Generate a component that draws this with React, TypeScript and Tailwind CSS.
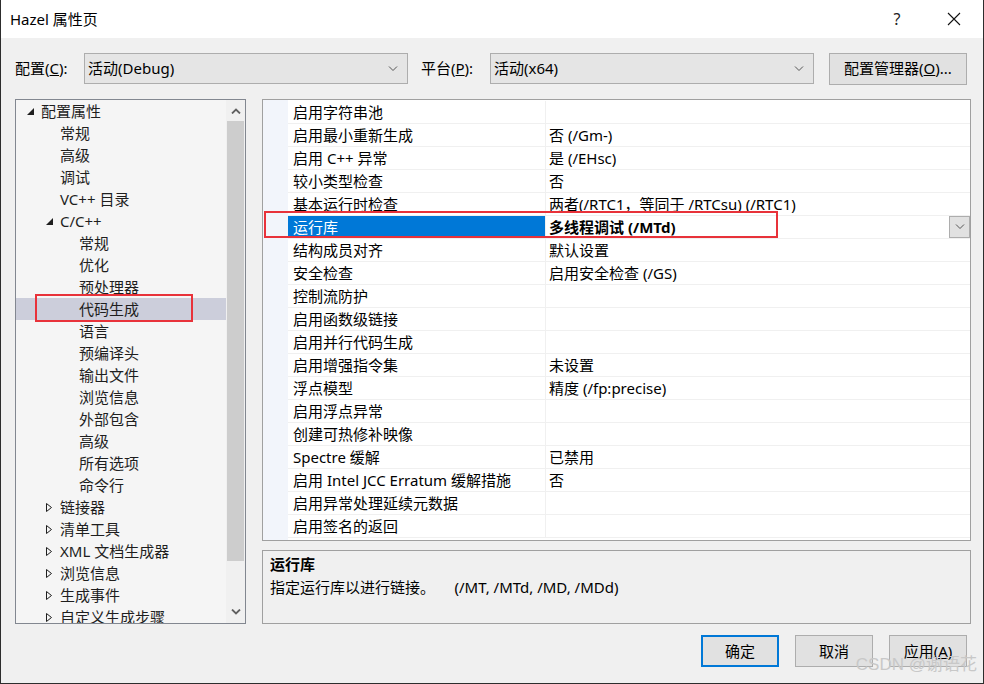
import React from 'react';

const font = "font-['Noto_Sans','Noto_Sans_CJK_SC',sans-serif]";

type TreeItem = { label: string; level: 0 | 1 | 2; arrow?: 'open' | 'closed'; selected?: boolean };

const tree: TreeItem[] = [
  { label: '配置属性', level: 0, arrow: 'open' },
  { label: '常规', level: 1 },
  { label: '高级', level: 1 },
  { label: '调试', level: 1 },
  { label: 'VC++ 目录', level: 1 },
  { label: 'C/C++', level: 1, arrow: 'open' },
  { label: '常规', level: 2 },
  { label: '优化', level: 2 },
  { label: '预处理器', level: 2 },
  { label: '代码生成', level: 2, selected: true },
  { label: '语言', level: 2 },
  { label: '预编译头', level: 2 },
  { label: '输出文件', level: 2 },
  { label: '浏览信息', level: 2 },
  { label: '外部包含', level: 2 },
  { label: '高级', level: 2 },
  { label: '所有选项', level: 2 },
  { label: '命令行', level: 2 },
  { label: '链接器', level: 1, arrow: 'closed' },
  { label: '清单工具', level: 1, arrow: 'closed' },
  { label: 'XML 文档生成器', level: 1, arrow: 'closed' },
  { label: '浏览信息', level: 1, arrow: 'closed' },
  { label: '生成事件', level: 1, arrow: 'closed' },
  { label: '自定义生成步骤', level: 1, arrow: 'closed' },
];

const props: [string, string][] = [
  ['启用字符串池', ''],
  ['启用最小重新生成', '否 (/Gm-)'],
  ['启用 C++ 异常', '是 (/EHsc)'],
  ['较小类型检查', '否'],
  ['基本运行时检查', '两者(/RTC1，等同于 /RTCsu) (/RTC1)'],
  ['运行库', '多线程调试 (/MTd)'],
  ['结构成员对齐', '默认设置'],
  ['安全检查', '启用安全检查 (/GS)'],
  ['控制流防护', ''],
  ['启用函数级链接', ''],
  ['启用并行代码生成', ''],
  ['启用增强指令集', '未设置'],
  ['浮点模型', '精度 (/fp:precise)'],
  ['启用浮点异常', ''],
  ['创建可热修补映像', ''],
  ['Spectre 缓解', '已禁用'],
  ['启用 Intel JCC Erratum 缓解措施', '否'],
  ['启用异常处理延续元数据', ''],
  ['启用签名的返回', ''],
];

function Chevron({ className = '', up = false, thick = false }: { className?: string; up?: boolean; thick?: boolean }) {
  return (
    <svg width="10" height="6" viewBox="0 0 10 6" className={className}>
      <path
        d={up ? 'M1 5.5L5 1.5L9 5.5' : 'M1 0.5L5 4.5L9 0.5'}
        fill="none"
        stroke="currentColor"
        strokeWidth={thick ? 1.8 : 1}
      />
    </svg>
  );
}

function Combo({ value, width }: { value: string; width: string }) {
  return (
    <div className={`${width} h-[31px] bg-[#e5e5e5] border border-[#adadad] flex items-center pl-[3px] pr-[9px]`}>
      <span className="flex-1 text-[15px] text-black">{value}</span>
      <Chevron className="text-[#555]" />
    </div>
  );
}

function Btn({ children, primary = false, className = '' }: { children: React.ReactNode; primary?: boolean; className?: string }) {
  return (
    <div
      className={`h-[32px] flex items-center justify-center bg-[#e1e1e1] text-[15px] text-black ${
        primary ? 'border-2 border-[#0078d7]' : 'border border-[#adadad]'
      } ${className}`}
    >
      {children}
    </div>
  );
}

function TreeArrow({ kind }: { kind: 'open' | 'closed' }) {
  if (kind === 'open')
    return (
      <svg width="9" height="9" viewBox="0 0 9 9">
        <path d="M8 1V8H1Z" fill="#1e1e1e" />
      </svg>
    );
  return (
    <svg width="8" height="11" viewBox="0 0 8 11">
      <path d="M1.5 1.5V9.5L6.5 5.5Z" fill="none" stroke="#1e1e1e" strokeWidth="1" />
    </svg>
  );
}

export default function App() {
  return (
    <div className={`${font} w-[984px] h-[684px] flex flex-col bg-[#f0f0f0] border-x border-b border-[#2d2d2d] overflow-hidden relative`}>
      {/* title bar */}
      <div className="h-[38px] bg-white flex items-center pl-[9px] shrink-0">
        <span className="flex-1 text-[15px] text-black">Hazel 属性页</span>
        <span className="w-[20px] text-center text-[16px] text-[#222] mr-[40px]">?</span>
        <svg width="14" height="14" viewBox="0 0 14 14" className="mr-[22px]">
          <path d="M1 1L13 13M13 1L1 13" stroke="#111" strokeWidth="1.1" />
        </svg>
      </div>

      {/* config row */}
      <div className="flex items-center mt-[15px] pl-[14px] h-[31px] shrink-0">
        <span className="w-[69px] text-[15px] text-black">
          配置(<span className="underline">C</span>):
        </span>
        <Combo value="活动(Debug)" width="w-[324px]" />
        <span className="ml-[13px] w-[69px] text-[15px] text-black">
          平台(<span className="underline">P</span>):
        </span>
        <Combo value="活动(x64)" width="w-[324px]" />
        <Btn className="ml-[15px] w-[138px]">
          配置管理器(<span className="underline">O</span>)...
        </Btn>
      </div>

      {/* main */}
      <div className="flex mt-[15px] pl-[14px] h-[525px] shrink-0">
        {/* tree */}
        <div className="relative w-[231px] h-full border border-[#828790] bg-[#f5f5f5] flex">
          <div className="flex-1 overflow-hidden">
            {tree.map((t, i) => (
              <div key={i} className={`h-[22px] flex items-center text-[15px] text-[#1e1e1e] ${t.selected ? 'bg-[#cccedb]' : ''}`}>
                <div
                  className={`flex items-center justify-center w-[12px] ${
                    t.level === 0 ? 'ml-[8px]' : 'ml-[27px]'
                  }`}
                >
                  {t.arrow && <TreeArrow kind={t.arrow} />}
                </div>
                <span className={t.level === 0 ? 'ml-[5px]' : t.level === 1 ? 'ml-[5px]' : 'ml-[24px]'}>{t.label}</span>
              </div>
            ))}
          </div>
          {/* scrollbar */}
          <div className="w-[19px] h-full bg-[#f0f0f0] flex flex-col items-center">
            <div className="h-[21px] flex items-center justify-center text-[#606060]">
              <Chevron up thick />
            </div>
            <div className="w-[17px] flex-1 bg-[#cdcdcd]" />
            <div className="h-[62px] flex items-end pb-[8px] justify-center text-[#606060]">
              <Chevron thick />
            </div>
          </div>
          {/* annotation */}
          <div className="absolute left-[19px] top-[194px] w-[158px] h-[28px] border-2 border-[#e8323a]" />
        </div>

        {/* right column */}
        <div className="ml-[16px] w-[709px] flex flex-col">
          <div className="relative h-[442px] border border-[#a0a0a0] bg-white flex">
            <div className="w-[25px] bg-[#f2f5fb]" />
            <div className="flex-1 flex flex-col pt-[1px]">
              {props.map(([name, value], i) => {
                const sel = i === 5;
                return (
                  <div key={i} className="h-[23px] flex border-b border-[#f0f0f0] text-[15px] text-black">
                    <div className={`w-[258px] pl-[5px] flex items-center border-r border-[#f0f0f0] ${sel ? 'bg-[#0078d7] text-white' : ''}`}>
                      {name}
                    </div>
                    <div className={`flex-1 pl-[3px] flex items-center ${sel ? 'font-bold' : ''}`}>
                      <span className="flex-1">{value}</span>
                      {sel && (
                        <div className="w-[21px] h-[22px] bg-[#e1e1e1] border border-[#adadad] flex items-center justify-center text-[#555]">
                          <Chevron />
                        </div>
                      )}
                    </div>
                  </div>
                );
              })}
            </div>
            <div className="absolute left-[1px] top-[111px] w-[514px] h-[27px] border-2 border-[#e8323a]" />
          </div>
          <div className="mt-[9px] h-[74px] border border-[#a0a0a0] bg-[#f0f0f0] px-[7px] pt-[2px] text-[15px] text-black">
            <div className="h-[23px] font-bold flex items-center">运行库</div>
            <div className="h-[23px] flex items-center whitespace-pre">指定运行库以进行链接。     (/MT, /MTd, /MD, /MDd)</div>
          </div>
        </div>
      </div>

      {/* bottom buttons */}
      <div className="flex justify-end gap-[16px] mt-[11px] pr-[16px]">
        <Btn primary className="w-[78px]">确定</Btn>
        <Btn className="w-[78px]">取消</Btn>
        <Btn className="w-[78px]">
          应用(<span className="underline">A</span>)
        </Btn>
      </div>

      <div className="absolute right-[6px] bottom-[6px] text-[17px] text-[#c8c8c8] font-['Liberation_Sans','Noto_Sans_CJK_SC',sans-serif] pointer-events-none">
        CSDN @谢语花
      </div>
    </div>
  );
}
